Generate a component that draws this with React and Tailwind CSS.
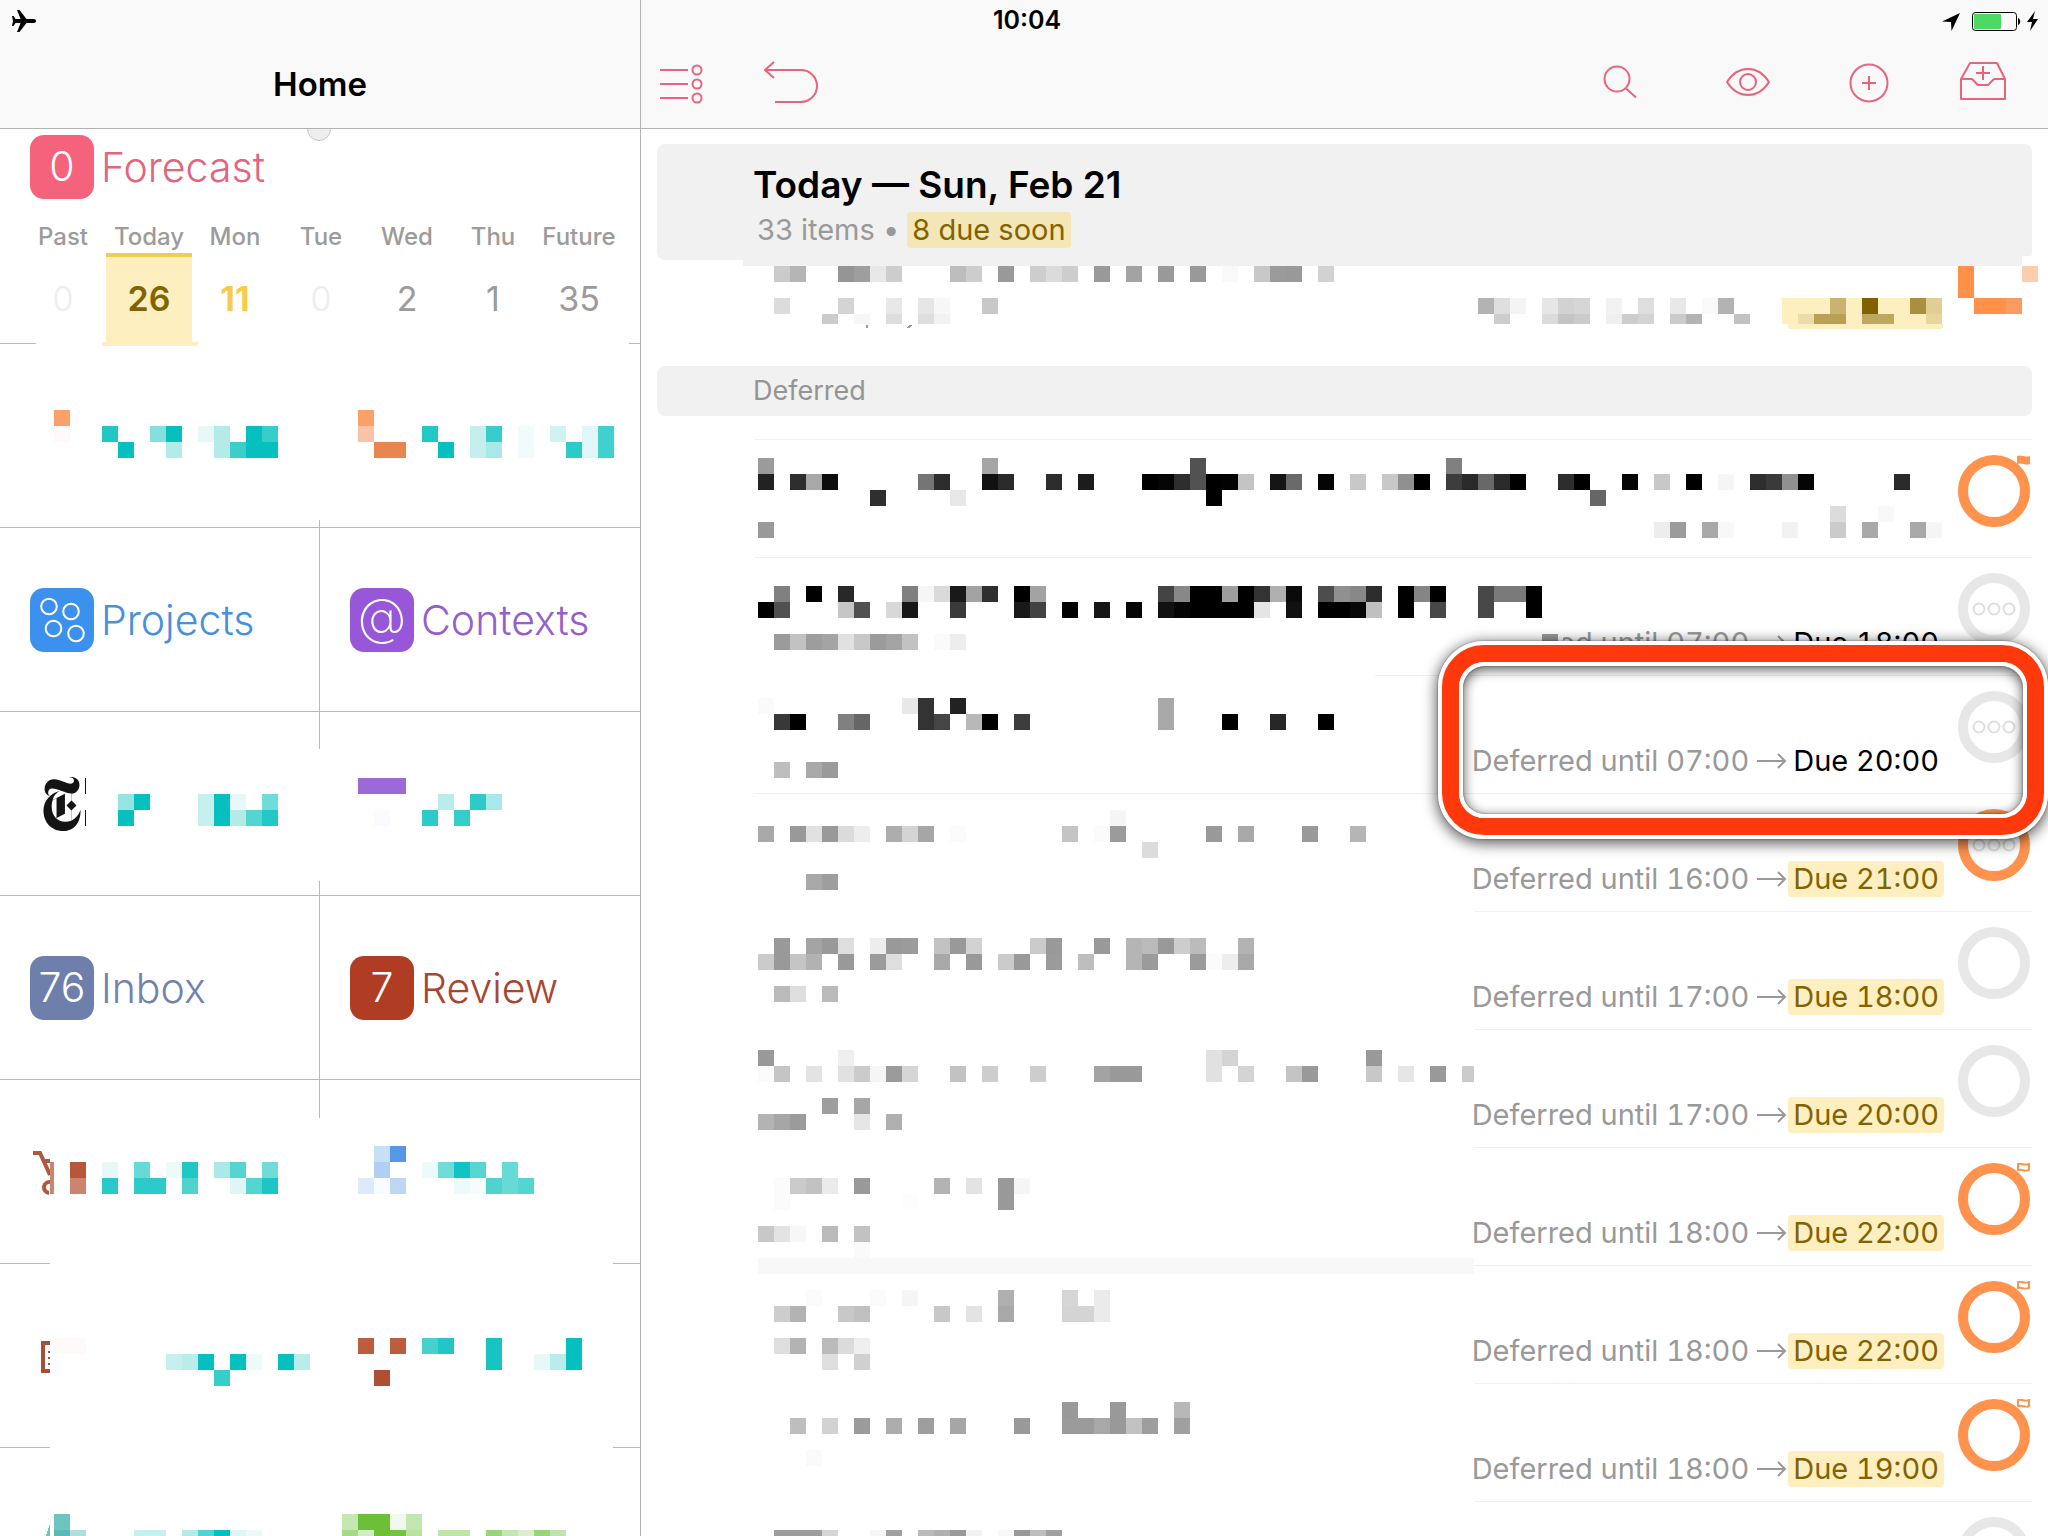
import { SiNewyorktimes } from "react-icons/si";

const CELL = 16;

/* Pixelated redaction. Each line is "y|col:shade col-col:shade"; columns are 16px
   wide from x0, shades are a grey byte or a full hex colour. */
function Mosaic({ x0, left, top, lines = [], covers = [], limit = Infinity, children }) {
  const rects = [];
  lines.forEach((line) => {
    const [head, body] = line.split("|");
    const [y, h] = head.split("/").map(Number);
    body.split(" ").forEach((token) => {
      const [cols, shade] = token.split(":");
      const [a, b] = cols.split("-").map(Number);
      const x = x0 + a * CELL;
      rects.push({
        x,
        y,
        w: Math.min(((b || a) - a + 1) * CELL, limit - x),
        h: h || CELL,
        fill: "#" + (shade.length === 2 ? shade.repeat(3) : shade),
      });
    });
  });
  return (
    <svg
      aria-hidden="true"
      shapeRendering="crispEdges"
      className="pointer-events-none absolute left-0 top-0 h-full w-full overflow-visible"
    >
      <g transform={`translate(${-left} ${-top})`}>
        {covers.map(([x, y, w, h]) => (
          <rect key={`${x}-${y}`} x={x} y={y} width={w} height={h} fill="#fff" />
        ))}
        {rects.map((r) => (
          <rect key={`${r.x}-${r.y}`} x={r.x} y={r.y} width={r.w} height={r.h} fill={r.fill} />
        ))}
        {children}
      </g>
    </svg>
  );
}

function StatusBar() {
  return (
    <div className="pointer-events-none absolute inset-x-0 top-0 z-20 grid h-[41px] grid-cols-3 items-center pl-3 pr-[10px]">
      <svg aria-label="Airplane mode" viewBox="0 0 24 22" className="h-[22px] w-6">
        <path d="M24 11c0-1.3-1-2-2.200-2h-7.300L7.500 0H5l3.600 9H3.500L1.500 6H0l1 5-1 5h1.500l2-3h5.100L5 22h2.500l7-9h7.300c1.200 0 2.200-.7 2.200-2z" />
      </svg>
      <span className="pl-1 text-center text-[25px] font-semibold">10:04</span>
      <svg aria-label="Battery charging" viewBox="1940 8 98 24" className="h-6 w-[98px] justify-self-end">
        <path d="M1960 12l-18 8.500 9 .500.500 9z" />
        <rect x="1972.500" y="11.500" width="44" height="18" rx="3" fill="none" stroke="#000" />
        <rect x="1974" y="13" width="27" height="15" rx="1" fill="#4cd964" />
        <path d="M2018 17c3 1 3 6 0 7z" />
        <path d="M2035 10l-8 11h5l-2 9 8-12h-5z" />
      </svg>
    </div>
  );
}

function ToolButton({ label, box, className, children }) {
  return (
    <button type="button" aria-label={label} className={className}>
      <svg viewBox={box} fill="none" stroke="#e8647c" strokeWidth="2" className="h-full w-full">
        {children}
      </svg>
    </button>
  );
}

function Toolbar() {
  return (
    <header className="flex h-[129px] shrink-0 items-end border-b border-[#b2b2b2] bg-[#f9f9f9] pb-[22px] pl-[19px] pr-10">
      <ToolButton label="Show list" box="660 58 44 48" className="h-12 w-11">
        <path d="M660 70h28M660 84h28M660 98h28" />
        <circle cx="697" cy="70" r="4.500" />
        <circle cx="697" cy="84" r="4.500" />
        <circle cx="697" cy="98" r="4.500" />
      </ToolButton>
      <ToolButton label="Undo" box="764 58 56 48" className="ml-[60px] h-12 w-14">
        <path d="M774 62l-9 8 9 8M765 70h36a16 16 0 0 1 0 32h-26" />
      </ToolButton>
      <div className="flex-1" />
      <ToolButton label="Search" box="1596 58 48 48" className="h-12 w-12">
        <circle cx="1617" cy="79" r="12.500" />
        <path d="M1625.500 88l10.500 9.500" />
      </ToolButton>
      <ToolButton label="View options" box="1724 58 48 48" className="ml-20 h-12 w-12">
        <path d="M1727 82c5-8 12-13 21-13s16 5 21 13c-5 8-12 13-21 13s-16-5-21-13z" />
        <circle cx="1748" cy="82" r="8" />
      </ToolButton>
      <ToolButton label="Add item" box="1845 58 48 48" className="ml-[73px] h-12 w-12">
        <circle cx="1869" cy="83" r="18.500" />
        <path d="M1869 76v14M1862 83h14" />
      </ToolButton>
      <ToolButton label="Add to inbox" box="1960 58 48 48" className="ml-[67px] h-12 w-12">
        <path strokeLinejoin="round" d="M1970 63h27l8 16v20h-44V79zM1961 79h11l6 6h10l6-6h11M1983 66v14M1976 73h14" />
      </ToolButton>
    </header>
  );
}

const DAYS = [
  { name: "Past", count: "0", style: "font-light text-[#ededed]" },
  { name: "Today", count: "26", style: "font-semibold text-[#826300]" },
  { name: "Mon", count: "11", style: "font-bold text-[#f6cd4b]" },
  { name: "Tue", count: "0", style: "font-light text-[#ededed]" },
  { name: "Wed", count: "2", style: "text-[#9b9b9b]" },
  { name: "Thu", count: "1", style: "text-[#9b9b9b]" },
  { name: "Future", count: "35", style: "text-[#9b9b9b]" },
];

function Tile({ badge, bg, color, label }) {
  return (
    <a href="#" className="flex items-center gap-[7px]">
      <span className={`flex h-16 w-16 items-center justify-center rounded-[14px] text-[41px] font-light text-white ${bg}`}>
        {badge}
      </span>
      <span className={`text-[41px] leading-[50px] font-light ${color}`}>{label}</span>
    </a>
  );
}

function Forecast() {
  return (
    <section className="relative h-[215px] shrink-0 overflow-hidden pt-[6px]">
      <span className="absolute -top-3 left-[307px] h-6 w-6 rounded-full border border-[#c6c6c6] bg-[#eeeeee]" />
      <div className="pl-[30px]">
        <Tile badge="0" bg="bg-[#f4627c]" color="text-[#e0667e]" label="Forecast" />
      </div>
      <div className="mt-[22px] grid grid-cols-7 pl-5 pr-[18px]">
        {DAYS.map((d) => (
          <a key={d.name} href="#" className="flex flex-col items-center">
            <span className="h-8 text-2xl font-medium leading-8 text-[#9b9b9b]">{d.name}</span>
            <span
              className={`flex h-[90px] w-full items-center justify-center border-t-4 pb-1 text-[34px] ${d.style} ${
                d.name === "Today" ? "border-[#f3cd52] bg-[#fdefc0]" : "border-transparent"
              }`}
            >
              {d.count}
            </span>
          </a>
        ))}
      </div>
    </section>
  );
}

const Dots = () => (
  <svg aria-hidden="true" viewBox="0 0 64 64" fill="none" stroke="#fff" strokeWidth="2" className="h-16 w-16">
    <circle cx="19" cy="18.500" r="7.800" />
    <circle cx="41" cy="23.500" r="7.800" />
    <circle cx="23.500" cy="40.500" r="7.800" />
    <circle cx="46" cy="45.500" r="7.800" />
  </svg>
);

const At = () => <span className="pb-2 text-[50px] leading-none font-extralight">@</span>;

function SidebarRow({ cells = [null, null], top, lines, covers, art }) {
  return (
    <div className="relative grid h-[184px] shrink-0 grid-cols-2">
      {cells.map((cell, i) => (
        <div
          key={i}
          className={`flex items-center border-b border-[#bababa] pl-[30px] ${i === 0 ? "border-r" : ""}`}
        >
          {cell}
        </div>
      ))}
      {(lines || covers) && (
        <Mosaic x0={54} left={0} top={top} lines={lines} covers={covers}>
          {art}
        </Mosaic>
      )}
    </div>
  );
}

const HIDDEN_1 = [
  "410|0:fca06a 19:fca06a",
  "426|0:fffafa 3:22c6c6 6:85dfdf 7:06c0c0 9:e6f8f7 10:b2ebe8 12:06c0c0 13:36cdcb 19:f8c3a8 23:22c8c6 26:c5efed 27:36cdcb 29:f2fafc 31:d0f2f1 33:e0f6f8 34:40d0ce",
  "442|4:06c0c0 7:b2ebe8 10:b2ebe8 11:3dcdcb 12-13:06c0c0 20-21:e8864f 24:06c0c0 26:c5efed 27:a8e8e6 29:f2fafc 32:2ccac8 33:e0f6f8 34:40d0ce",
];
const HIDDEN_2 = [
  "778|19-21:9d69d8",
  "794|4:93e4e2 5:06c0c0 9:c5f0ee 10:06c0c0 11:e6f8f7 13:6edcda 24:b8edeb 26:2ccac8 27:a8e8e6",
  "810|4:06c0c0 9:c5f0ee 10:06c0c0 11:b2ebe8 12:55d5d2 13:22c8c6 20:fcfaff 23:2ccac8 25:36ccca",
];
const HIDDEN_3 = [
  "1146|20:c8dff8 21:5598e8",
  "1162|1:b8563a 3:e6f8f7 5:66dad7 7:edfafa 8:22c6c6 10:aae9e7 11:55d5d2 13:70dcd9 20:b0cff3 23:edfafa 24:70dcd9 25:12c3c3 26:58d6d4 28:66dad7",
  "1178|1:ca8470 3:28c9c8 5-6:2ccac8 8:50d2cf 11:e0f6f6 12:55d5d2 13:1cc6c4 19:dee9fa 20:f8fbff 21:bfd7f4 25:edfafa 26:f5fcfb 27:50d2cf 28:66dad7 29:55d5d2",
];
const HIDDEN_4 = [
  "1338|0-1:fffafa 19:bb5d3e 21:bb5d3e 23:48d0ce 24:22c6c6 27:18c4c2 32:06bfbf",
  "1354|7:c5f0ee 8:b8edeb 9:06c0c0 11:06bfbf 12:edfafa 14:06bfbf 15:b8edeb 27:18c4c2 30:e6f8f7 31:b8edeb 32:06bfbf",
  "1370|10:36cdcb 20:ae4e33",
];
const HIDDEN_5 = [
  "1514|0:6cc5c0 18:c4e8b0 19-20:6cbf36 21:f0f9ec 22:c4e6b0",
  "1530|0:5cb9b6 1:b0dfdb 5-6:c5f0ee 8:b2ebe8 9:50d4d1 10:06bfbf 11:dff6f7 12:edf8fa 18:a4d988 19:d4ecc4 20:6cbf36 21:74c346 22:b8e29e 24-25:bfe4a8 27:9ad37c 28:c5e6b4 29:d8eecc 30:9ad37c 31:c0e4ac",
];

function Sidebar() {
  return (
    <aside className="flex w-[641px] shrink-0 flex-col overflow-hidden border-r border-[#b2b2b2]">
      <header className="flex h-[129px] shrink-0 items-end justify-center border-b border-[#b2b2b2] bg-[#f9f9f9] pb-6">
        <h1 className="text-[33px] leading-10 font-semibold">Home</h1>
      </header>
      <Forecast />
      <SidebarRow
        top={344}
        lines={HIDDEN_1}
        covers={[[36, 344, 593, 176]]}
        art={
          <>
            <path d="M0 343h36v1H0zM629 343h11v1h-11z" fill="#bababa" />
            <rect x="102" y="342" width="96" height="4" rx="2" fill="#fdefc0" />
          </>
        }
      />
      <SidebarRow
        cells={[
          <Tile badge={<Dots />} bg="bg-[#3b91ed]" color="text-[#4890da]" label="Projects" />,
          <Tile badge={<At />} bg="bg-[#9857d9]" color="text-[#955fcb]" label="Contexts" />,
        ]}
      />
      <SidebarRow
        cells={[
          <SiNewyorktimes
            aria-label="The New York Times"
            preserveAspectRatio="none"
            className="ml-2 h-[54px] w-12 text-[#141414]"
          />,
          null,
        ]}
        top={712}
        lines={HIDDEN_2}
        covers={[[310, 749, 20, 132]]}
        art={<path d="M85 778h1v16h-1zM85 810h1v16h-1z" fill="#141414" />}
      />
      <SidebarRow
        cells={[
          <Tile badge="76" bg="bg-[#6d7faa]" color="text-[#7382ab]" label="Inbox" />,
          <Tile badge="7" bg="bg-[#b03c24]" color="text-[#a94632]" label="Review" />,
        ]}
      />
      <SidebarRow
        top={1080}
        lines={HIDDEN_3}
        covers={[[310, 1118, 20, 146], [50, 1255, 563, 20]]}
        art={
          <g shapeRendering="geometricPrecision">
            <path d="M33 1153h7l10 22M43 1161h7" stroke="#b0583f" strokeWidth="4" fill="none" />
            <path d="M50 1182a5 5 0 0 0-1 11" stroke="#b0583f" strokeWidth="4" fill="none" />
            <rect x="50" y="1162" width="4" height="32" fill="#ca8470" />
          </g>
        }
      />
      <SidebarRow
        top={1264}
        lines={HIDDEN_4}
        covers={[[310, 1264, 20, 184], [50, 1439, 563, 20]]}
        art={
          <g fill="#a84e38">
            <path d="M41 1341h9v4h-5v24h5v4h-9z" />
            <path d="M48 1351h2v2h-2zM48 1357h2v2h-2zM48 1363h2v2h-2z" />
          </g>
        }
      />
      <SidebarRow
        top={1448}
        lines={HIDDEN_5}
        covers={[[310, 1448, 20, 88]]}
        art={<path d="M50 1524l-4 12h4z" fill="#6cc5c0" />}
      />
    </aside>
  );
}

const TOP_LINES = [
  "266|1:cb 2:b5 5:95 6:9e 7:e8 8:cd 12:bd 13:cd 15:99 17:cd 18:db 19:cd 21:99 23:a3 25:99 27:99 29:f9 31:c8 32:9b 33:99 35:d2 75:ff914a 79:fdcdb0",
  "282|75:ff914a",
  "298|1:dc 5:d4 8:e8 10:e6 11:f7 14:c8 45:b3 46:de 47:f4 49:e6 50:d2 51:d6 53:f2 55:de 57:e8 59:f9 60:b3 64-66:fdefc0 67:c9b370 68:fdefc0 69:826000 70-71:fdefc0 72:ab8f40 73:e0ce94 76-77:ff914a 78:fd9b5f",
  "314/10|4:cb 6:f6 8:de 10:de 11:f2 46:cd 49:db 50:c4 51:cb 53:ef 54:cd 55:d4 57:cb 58:b3 61:c2 64:fdefc0 65:eddba8 66-67:b9a055 68:fdefc0 69-70:bda860 71-72:fdefc0 73:e8d69f",
];

const TASKS = [
  {
    ring: "orange",
    flag: "solid",
    lines: [
      "458|0:9b 14:a5 27:52 43:80",
      "474|0:22 2:2e 3:a8 4:0d 10:75 11:2d 14:11 15:2a 18:2d 20:1c 24:00 25:05 26:2e 27:52 28:00 29:02 30:c4 32:15 33:6a 35:05 37:c8 39:c8 40:90 41:00 43:3c 44:2a 45:68 46:2a 47:00 50:2d 51:00 54:05 56:c8 58:00 60:f5 62:2e 63:3a 64:90 65:05 71:2a",
      "490|7:2f 12:e7 28:00 52:66",
      "506|67:dc 70:f8",
      "522|0:99 56:ed 57:9b 59:a8 60:f8 64:f2 67:cb 69:a8 72:a8 73:f5",
    ],
  },
  {
    ring: "gray",
    dots: true,
    from: "07:00",
    due: "18:00",
    covers: [[754, 562, 809, 112]],
    lines: [
      "586|1:80 3:00 5:28 9:80 10:f6 11:da 12:19 13:a3 14:2f 16:00 17:a3 25:44 26:88 27-28:00 29:9e 30:00 31:33 32:b0 33:0a 35:4d 36:90 37:88 38:2d 40:00 41:85 42:00 45:48 46-47:7a 48:00",
      "602|0:00 1:50 5:c6 6:50 8:d8 9:17 12:3a 16:19 17:42 19:00 21:16 23:05 25:11 26:05 27-30:00 31:e5 33:11 35-36:00 37:08 38:c0 40:00 42:48 45:48 48:00",
      "634|1:9b 2:c2 3:9d 4:a4 5:e1 6:c8 7:9b 8:a4 9:c2 11:fa 12:ed 49:99",
    ],
  },
  {
    ring: "gray",
    dots: true,
    from: "07:00",
    due: "20:00",
    highlight: true,
    covers: [[754, 670, 621, 20]],
    lines: [
      "698|0:fa 9:e8 10:33 12:22 25:a8",
      "714|1:38 2:00 5:80 6:66 10:33 11:45 13:b8 14:00 16:3d 25:a8 29:00 32:27 35:00",
      "762|1:be 3:a8 4:9a",
    ],
  },
  {
    ring: "orange",
    dots: true,
    from: "16:00",
    due: "21:00",
    soon: true,
    covers: [[754, 800, 720, 110]],
    lines: [
      "810|22:f5",
      "826|0:a8 2:99 3:e1 4:99 5:db 6:ed 8:ad 9:d4 10:a6 12:fb 19:c4 21:fb 22:9b 28:99 30:a8 34:99 37:b5",
      "842|24:dc",
      "874|3:a8 4:9e",
    ],
  },
  {
    ring: "gray",
    from: "17:00",
    due: "18:00",
    soon: true,
    covers: [[754, 910, 720, 118]],
    lines: [
      "938|1:99 3:a4 4:99 5:de 7:ed 8:99 9:9b 11:c2 12:99 13:d2 17:cb 18:99 21:99 23:b5 24:ba 25:99 26:cd 27:bb 30:b3",
      "954|0:cb 1:99 2:c5 3:b2 5:99 7:9b 8:de 11:a8 13:99 15:cb 16:99 18:9b 20:be 23:b5 24:9b 27:9b 28:fb 29:ed 30:a8",
      "986|1:ba 2:de 4:ba",
    ],
  },
  {
    ring: "gray",
    from: "17:00",
    due: "20:00",
    soon: true,
    covers: [[754, 1028, 720, 118]],
    limit: 1474,
    lines: [
      "1050|0:99 5:ef 28:e1 29:d4 38:99",
      "1066|0:fb 1:c5 3:e3 5:e1 6:cb 7:f5 8:9b 9:d6 12:c2 14:cd 17:cd 21:a3 22-23:99 28:e1 30:d4 33:c4 34:99 38:c8 40:e6 42:99 44:cb",
      "1098|4:9e 6:a6",
      "1114|0:b3 1:a6 2:9b 6:e6 8:b0",
    ],
  },
  {
    ring: "orange",
    flag: "outline",
    from: "18:00",
    due: "22:00",
    soon: true,
    covers: [[754, 1146, 720, 118]],
    lines: [
      "1178|1:fb 2:cb 3:c2 4:eb 6:99 11:b3 13:e3 15:99 16:f5",
      "1194|1:fb 9:fd 15:99",
      "1226|0:c8 1:e3 2:f7 4:ba 6:c2",
      "1242|6:fa",
    ],
  },
  {
    ring: "orange",
    flag: "outline",
    from: "18:00",
    due: "22:00",
    soon: true,
    covers: [[754, 1264, 720, 118]],
    limit: 1474,
    lines: [
      "1258|0-44:f8",
      "1290|3:fb 7:fb 9:f5 15:b0 19:d6 21:eb",
      "1306|1:cd 2:b3 5:c8 6:c0 11:c8 13:e3 15:a8 19-20:d4 21:eb",
      "1338|1:de 2:b3 4:ba 5:db 6:ef",
      "1354|4:de 6:d0",
    ],
  },
  {
    ring: "orange",
    flag: "outline",
    from: "18:00",
    due: "19:00",
    soon: true,
    covers: [[754, 1382, 720, 118]],
    lines: [
      "1402|19:99 22:99 26:b8",
      "1418|2:be 4:d2 6:9b 8:ad 10:9e 12:a6 16:99 19-20:9b 21:a8 22:99 23:c2 24:9e 26:a0",
      "1450|3:fa",
    ],
  },
  {
    ring: "gray",
    covers: [[754, 1500, 720, 36]],
    lines: ["1530|1-3:9e 4:d6 7:f5 8:a0 10:ba 11:b0 12:99 13:f2 15:f8 16:99 17:be 18:a0"],
  },
];

function Task({ task, index }) {
  return (
    <li className="relative flex h-[118px] shrink-0 justify-end border-t border-[#f0f0f0]">
      {task.due && (
        <p className="mr-[14px] mt-[67px] flex h-9 items-center text-[29px] leading-9 tabular-nums text-[#999999]">
          <span>Deferred until {task.from}</span>
          <svg aria-hidden="true" viewBox="0 0 30 16" fill="none" stroke="#999" strokeWidth="2" className="ml-2 mr-px h-4 w-[30px]">
            <path d="M0 8h28M21 1l7 7-7 7" />
          </svg>
          <span className={`rounded px-[5px] ${task.soon ? "bg-[#fdefc0] text-[#826300]" : "text-black"}`}>
            Due {task.due}
          </span>
        </p>
      )}
      <Mosaic
        x0={758}
        left={754}
        top={440 + index * 118}
        lines={task.lines}
        covers={task.covers}
        limit={task.limit}
      />
      <div className="relative mr-[2px] mt-[15px] h-[72px] w-[72px]">
        <input
          type="checkbox"
          aria-label={`Task ${index + 1}`}
          className={`block h-[72px] w-[72px] appearance-none rounded-full border-10 ${
            task.ring === "orange" ? "border-[#ff924d]" : "border-[#e7e7e7]"
          }`}
        />
        <svg aria-hidden="true" viewBox="0 0 72 72" fill="none" className="pointer-events-none absolute left-0 top-0 h-[72px] w-[72px]">
          {task.dots && (
            <g stroke="#dedede" strokeWidth="2">
              <circle cx="21" cy="36" r="5.500" />
              <circle cx="36" cy="36" r="5.500" />
              <circle cx="51" cy="36" r="5.500" />
            </g>
          )}
          {task.flag === "solid" && <path d="M59 1c5-2 8 2 13 0v8c-5 2-8-2-13 0z" fill="#ff924d" />}
          {task.flag === "outline" && (
            <path d="M60 1c4-1 7 2 11 0v6c-4 2-7-1-11 0z" fill="#fff" stroke="#ff924d" strokeWidth="2" />
          )}
        </svg>
      </div>
      {task.highlight && (
        <div className="pointer-events-none absolute -right-4 -top-[35px] z-10 h-[198px] w-[610px] rounded-[46px] border-4 border-white shadow-[0_3px_14px_2px_rgba(0,0,0,0.6),0_0_2px_rgba(0,0,0,0.5)]">
          <div className="h-full w-full rounded-[42px] border-[17px] border-[#ff390c]">
            <div className="h-full w-full rounded-[26px] border-4 border-white">
              <div className="h-full w-full rounded-[22px] shadow-[inset_0_3px_12px_1px_rgba(0,0,0,0.6),inset_0_0_2px_rgba(0,0,0,0.5)]" />
            </div>
          </div>
        </div>
      )}
    </li>
  );
}

function Main() {
  return (
    <main className="flex min-w-0 flex-1 flex-col overflow-hidden">
      <Toolbar />
      <section className="relative ml-4 mr-4 mt-[15px] h-[116px] shrink-0 rounded-lg bg-[#f1f1f1] pl-24 pt-[18px]">
        <h2 className="text-[37px] leading-[46px] font-semibold">Today — Sun, Feb 21</h2>
        <p className="flex items-center gap-2 pl-1 pt-1 text-[29px] leading-9 text-[#999999]">
          <span>33 items •</span>
          <span className="rounded bg-[#f5e6b8] px-[5px] text-[#826300]">8 due soon</span>
        </p>
        <Mosaic x0={758} left={657} top={144} lines={TOP_LINES}>
          <rect x="743" y="256" width="1279" height="10" fill="#f1f1f1" />
          <rect x="2022" y="256" width="10" height="10" fill="#fff" />
          <path d="M1788 324h155v2q0 3-3 3h-149q-3 0-3-3z" fill="#fdefc0" />
          <path d="M866 325h2v3h-2zM909 325h3l-2 3h-3z" fill="#999" />
        </Mosaic>
      </section>
      <h3 className="ml-4 mr-4 mt-[106px] h-[50px] shrink-0 rounded-lg bg-[#f1f1f1] pl-24 text-[27px] leading-[50px] text-[#949494]">
        Deferred
      </h3>
      <ul className="ml-[113px] mr-4 mt-[23px] flex flex-col">
        {TASKS.map((task, i) => (
          <Task key={i} task={task} index={i} />
        ))}
      </ul>
    </main>
  );
}

export default function App() {
  return (
    <div className="relative flex h-screen overflow-hidden bg-white font-['Inter','Liberation_Sans',sans-serif] text-black">
      <StatusBar />
      <Sidebar />
      <Main />
    </div>
  );
}
